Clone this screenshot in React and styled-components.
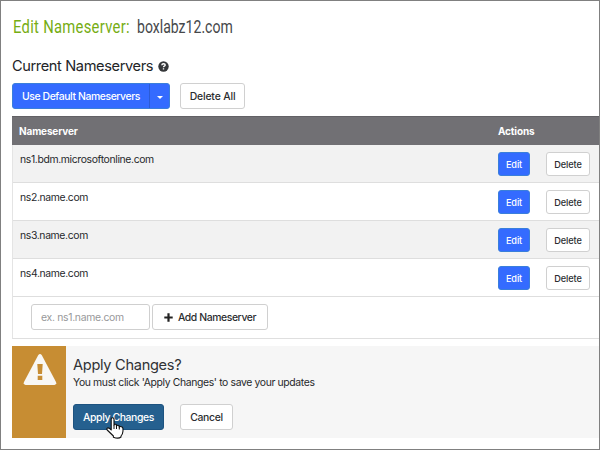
import React from "react";
import styled, { createGlobalStyle } from "styled-components";

const Global = createGlobalStyle`
  * { box-sizing: border-box; }
  body { margin: 0; background: #fff; }
`;
const Page = styled.main`
  width: 600px; height: 450px; overflow: hidden;
  border: 1px solid #808080;
  padding: 0 0 0 11px;
  background: #fff; color: #26282b;
  font-family: Inter, "Liberation Sans", sans-serif;
  font-size: 10.4px; line-height: 14px;
`;
const Title = styled.h1`
  display: flex; margin: 0; height: 54px; padding: 15px 0 0 1px;
  font: 400 18.5px/23px Roboto, "Liberation Sans", sans-serif;
  color: #76ad13; white-space: pre;
`;
const Condensed = styled.span`
  display: block; width: ${(p) => p.$width}px; color: ${(p) => p.$color};
  letter-spacing: ${(p) => p.$track || 0}px;
  transform: scaleX(${(p) => p.$scale}); transform-origin: 0 50%;
`;
const Label = styled.span`
  display: block; white-space: nowrap;
  letter-spacing: ${(p) => p.$track || 0}px;
`;
const Heading = styled.h2`
  display: flex; align-items: center; gap: 5px;
  margin: 0; height: 22px; font-size: 14.6px; font-weight: 400; line-height: 20px;
  color: #222427;
`;
const Toolbar = styled.div`
  display: flex; gap: 10px; margin-top: 6px; height: 33px; align-items: flex-start;
`;
const Button = styled.button`
  display: flex; align-items: center; justify-content: center; gap: 5px;
  flex: none; padding: 1px 0 0; width: ${(p) => p.$width}px; height: ${(p) => p.$height || 26}px;
  border: 1px solid #d0d0d0; border-radius: 3px; background: #fff; color: #2b2d30;
  font: inherit; font-weight: 450; letter-spacing: -0.12px;
`;
const PrimaryButton = styled(Button)`
  background: #346bff; border-color: #3a7fdb; color: #fff; font-weight: 500;
`;
const ApplyButton = styled(Button)`
  background: #25608f; border-color: #1d5380; color: #fff; font-weight: 500;
  letter-spacing: -0.38px;
`;
const Split = styled(PrimaryButton)` gap: 0; padding: 0; align-items: stretch; `;
const SplitText = styled.span`
  display: flex; flex: 1; align-items: center; justify-content: center; padding-top: 1px;
`;
const SplitCaret = styled.span`
  display: flex; width: 20px; align-items: center; justify-content: center;
  border-left: 1px solid #2c5cd5; padding-top: 2px;
`;
const Table = styled.section`
  border-left: 1px solid #e4e4e4; border-bottom: 1px solid #dfdfdf; height: 223px;
`;
const HeaderRow = styled.div`
  display: grid; grid-template-columns: 485px 1fr; height: 29px; align-items: center;
  margin-left: -1px; padding-left: 1px; background: #717074; color: #fff;
  border-top: 1px solid #626165; font-size: 10px; font-weight: 700; letter-spacing: -0.15px;
`;
const HeadCell = styled.div` padding-left: ${(p) => p.$inset || 0}px; margin-top: -1px; `;
const Row = styled.div`
  display: grid; grid-template-columns: 485px 48px 44px; height: 38px;
  border-bottom: 1px solid #dedede; background: ${(p) => (p.$shade ? "#f2f2f2" : "#fff")};
`;
const NameCell = styled.div` padding: 8px 0 0 7px; `;
const ActionCell = styled.div` padding-top: 7px; font-size: 9.2px; `;
const AddRow = styled.div` display: flex; gap: 2px; padding: 7px 0 0 18px; `;
const Input = styled.input`
  width: 119px; height: 26px; padding: 0 9px; border: 1px solid #cfcfcf; border-radius: 3px;
  font: inherit; letter-spacing: -0.3px; background: #fff;
  &::placeholder { color: #98989a; opacity: 1; }
`;
const Notice = styled.section`
  display: flex; height: 92px; margin-top: 7px; background: #f6f6f6;
`;
const WarningPanel = styled.div`
  display: flex; justify-content: center; align-items: flex-start;
  width: 54px; padding: 8px 0 0 2px; background: #c78d33;
`;
const NoticeBody = styled.div` padding: 9px 0 0 7px; `;
const NoticeTitle = styled.h3`
  margin: 0 0 1px; font-size: 14.6px; font-weight: 400; line-height: 20px;
  letter-spacing: -0.3px; color: #303235;
`;
const NoticeActions = styled.div`
  display: flex; gap: 16px; margin-top: 14px; position: relative;
`;
const Pointer = styled.svg` position: absolute; left: 33px; top: 13px; `;

const Help = () => (
  <svg width="11" height="11" viewBox="0 0 11 11">
    <circle cx="5.5" cy="5.5" r="5.2" fill="#35373a" />
    <path d="M3.8 4.3Q3.9 2.8 5.5 2.8Q7.2 2.8 7.2 4.1Q7.2 4.8 6.3 5.2Q5.5 5.6 5.5 6.3M5.5 7.3V8.6" fill="none" stroke="#fff" strokeWidth="1.4" />
  </svg>
);
const Caret = () => (
  <svg width="6" height="3" viewBox="0 0 6 3"><path d="M0 0H6L3 3Z" fill="#fff" /></svg>
);
const Plus = () => (
  <svg width="9" height="9" viewBox="0 0 9 9"><path d="M4.5 .3V8.7M.3 4.5H8.7" stroke="#222" strokeWidth="2.2" /></svg>
);
const Warning = () => (
  <svg width="34" height="31" viewBox="0 0 34 31">
    <path d="M15.3 1Q17 -.8 18.7 1L33 28Q34 30.5 31.5 31H2.5Q0 30.5 1 28Z" fill="#f8f7f4" />
    <path d="M14.3 10H19.7L19 20H15ZM14.7 21.7H19.3V26H14.7Z" fill="#c78d33" />
  </svg>
);

const servers = ["ns1.bdm.microsoftonline.com", "ns2.name.com", "ns3.name.com", "ns4.name.com"];

export default function App() {
  return (
    <>
      <Global />
      <Page>
        <Title>
          <Condensed $width={124} $color="#76ad13" $track={0.35} $scale={0.8}>Edit Nameserver:</Condensed>
          <Condensed $width={110} $color="#46484b" $track={0} $scale={0.76}>boxlabz12.com</Condensed>
        </Title>
        <Heading><Label $track={-0.38}>Current Nameservers</Label><Help /></Heading>
        <Toolbar>
          <Split $width={158}>
            <SplitText><Label $track={-0.4}>Use Default Nameservers</Label></SplitText>
            <SplitCaret><Caret /></SplitCaret>
          </Split>
          <Button $width={65}><Label $track={-0.15}>Delete All</Label></Button>
        </Toolbar>
        <Table>
          <HeaderRow><HeadCell $inset={6}>Nameserver</HeadCell><HeadCell>Actions</HeadCell></HeaderRow>
          {servers.map((name, i) => (
            <Row key={name} $shade={i % 2 === 0}>
              <NameCell><Label $track={-0.36}>{name}</Label></NameCell>
              <ActionCell><PrimaryButton $width={32} $height={24}>Edit</PrimaryButton></ActionCell>
              <ActionCell><Button $width={44} $height={24}>Delete</Button></ActionCell>
            </Row>
          ))}
          <AddRow>
            <Input placeholder="ex. ns1.name.com" />
            <Button $width={116}><Plus /><Label $track={-0.4}>Add Nameserver</Label></Button>
          </AddRow>
        </Table>
        <Notice>
          <WarningPanel><Warning /></WarningPanel>
          <NoticeBody>
            <NoticeTitle>Apply Changes?</NoticeTitle>
            <Label $track={-0.36}>You must click 'Apply Changes' to save your updates</Label>
            <NoticeActions>
              <ApplyButton $width={91}>Apply Changes</ApplyButton>
              <Button $width={53}><Label $track={-0.35}>Cancel</Label></Button>
              <Pointer width="18" height="23" viewBox="0 0 18 23">
                <path d="M5.2 2Q5.2 .7 6.5 .7Q8 .7 8 2.2V8Q8.5 6.6 10.4 7.6V9Q11.5 7.7 13.2 8.8V10Q14.5 9 16.4 10.2Q17.2 11 17 14Q16.8 17 15 19V20Q12.5 22.2 7.4 20.2V19L1.2 13Q.3 11.5 1.6 11Q3 10.5 5.2 13Z" fill="#fff" stroke="#111" strokeWidth="1.1" strokeLinejoin="round" />
                <path d="M8 8V12M10.5 8V12M13.3 9V12.5" stroke="#111" strokeWidth="1" />
              </Pointer>
            </NoticeActions>
          </NoticeBody>
        </Notice>
      </Page>
    </>
  );
}
